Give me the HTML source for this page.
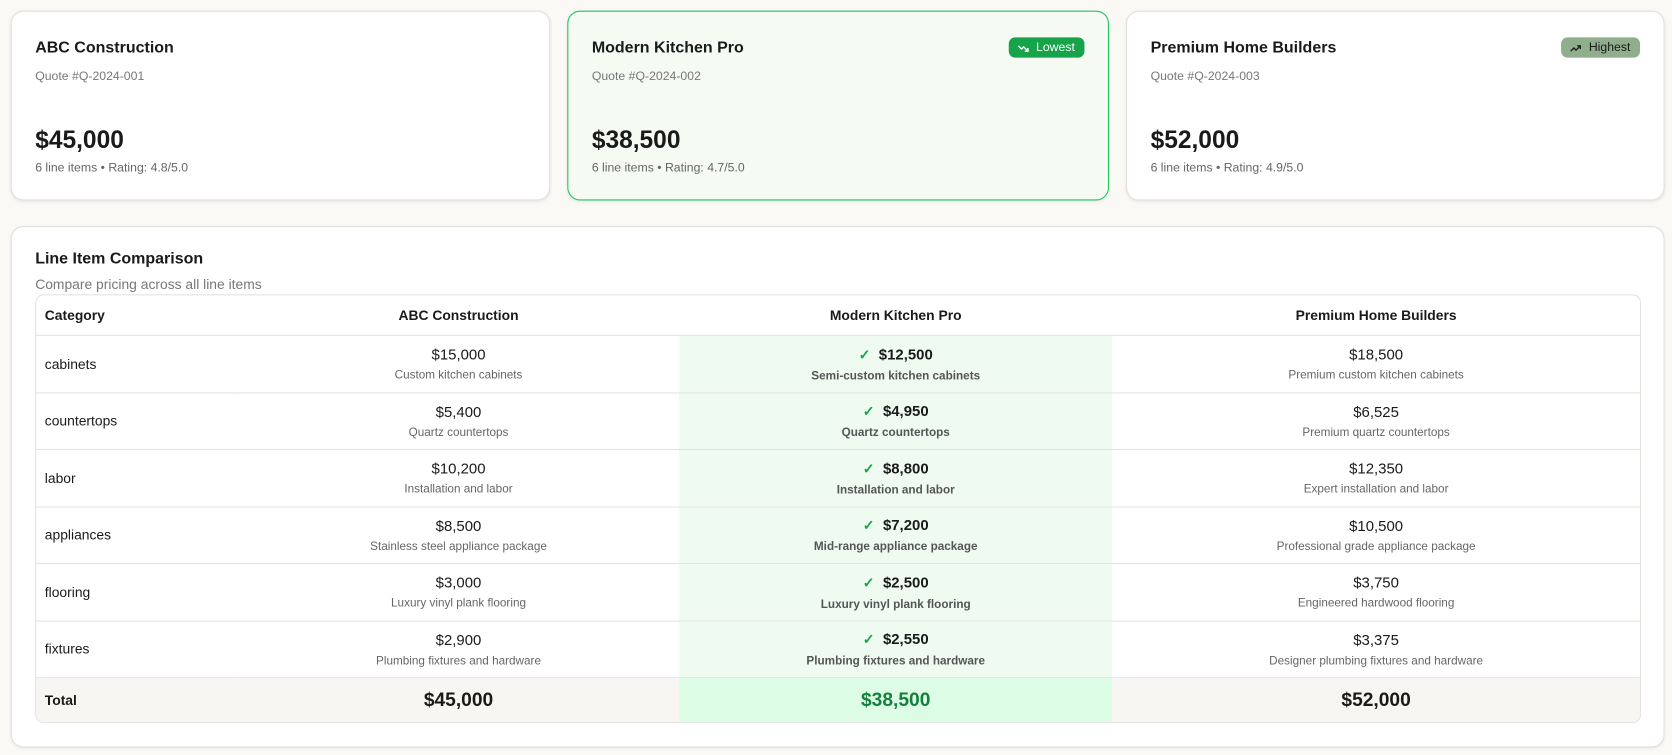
<!DOCTYPE html>
<html><head><style>
*{box-sizing:border-box;margin:0;padding:0}
html,body{width:1672px;height:755px;overflow:hidden}
body{background:#faf9f5;font-family:"Liberation Sans",sans-serif;color:#1a1a1a}
#w{position:relative;width:1568px;height:708px;transform:scale(1.06633);transform-origin:0 0}
.card{position:absolute;top:10px;height:178px;width:506px;background:#fff;border:1px solid #e2e0da;border-radius:12px;box-shadow:0 1px 3px rgba(0,0,0,.08)}
.card h3{position:absolute;left:22px;top:25px;font-size:15px;font-weight:600}
.card .q{position:absolute;left:22px;top:55px;font-size:11.5px;color:#777}
.card .p{position:absolute;left:22px;top:107px;font-size:23px;font-weight:700}
.card .s{position:absolute;left:22px;top:141px;font-size:11.5px;color:#666}
.badge{position:absolute;right:22px;top:24px;height:19px;border-radius:6px;font-size:11.5px;padding:0 9px 0 8px;display:flex;align-items:center;gap:6px}
.panel{position:absolute;left:10px;top:212px;width:1551px;height:489px;background:#fff;border:1px solid #e2e0da;border-radius:12px;box-shadow:0 1px 3px rgba(0,0,0,.06)}
.panel h2{position:absolute;left:22px;top:21px;font-size:15px;font-weight:600}
.panel .sub{position:absolute;left:22px;top:46px;font-size:13px;color:#777}
table{position:absolute;left:22px;top:63px;width:1506px;table-layout:fixed;border-collapse:separate;border-spacing:0;border:1px solid #e5e3de;border-radius:8px;overflow:hidden}
td,th{border-bottom:1px solid #e5e3de;text-align:center}
th{height:38px;font-size:13px;font-weight:600}
th:first-child,td:first-child{text-align:left;padding-left:8px}
td{height:53.5px;font-size:13px}
td .v{font-size:14px}
td .d{font-size:11px;color:#666;margin-top:6px}
.g{background:#effbf1}
.g .v{font-weight:600}.g .d{font-weight:600;color:#555}
.ck{color:#16a34a;margin-right:8px;font-size:13px}
tr.t td{border-bottom:none;height:41px;background:#f7f6f2;font-size:18px;font-weight:700}
tr.t td:first-child{font-size:13px}
tr.t td.g{background:#dcfce6;color:#15803d}
</style></head><body><div id="w">
<div class="card" style="left:10px"><h3>ABC Construction</h3><div class="q">Quote #Q-2024-001</div><div class="p">$45,000</div><div class="s">6 line items • Rating: 4.8/5.0</div></div>
<div class="card" style="left:532px;width:508px;background:#f5faf3;border-color:#22c55e"><h3>Modern Kitchen Pro</h3><div class="q">Quote #Q-2024-002</div><div class="p">$38,500</div><div class="s">6 line items • Rating: 4.7/5.0</div>
<div class="badge" style="background:#16a34a;color:#fff"><svg width="12" height="10" viewBox="0 0 12 10"><path d="M1 3l3 3 2-2 4 4M7 8h3V5" stroke="#fff" stroke-width="1.3" fill="none"/></svg>Lowest</div></div>
<div class="card" style="left:1056px;width:505px"><h3>Premium Home Builders</h3><div class="q">Quote #Q-2024-003</div><div class="p">$52,000</div><div class="s">6 line items • Rating: 4.9/5.0</div>
<div class="badge" style="background:#8fae8c;color:#1a1a1a"><svg width="12" height="10" viewBox="0 0 12 10"><path d="M1 8l3-3 2 2 4-4M7 3h3v3" stroke="#222" stroke-width="1.3" fill="none"/></svg>Highest</div></div>
<div class="panel"><h2>Line Item Comparison</h2><div class="sub">Compare pricing across all line items</div>
<table>
<colgroup><col style="width:189px"><col style="width:414px"><col style="width:406px"><col></colgroup>
<tr><th>Category</th><th>ABC Construction</th><th>Modern Kitchen Pro</th><th>Premium Home Builders</th></tr>
<tr><td>cabinets</td><td><div class="v">$15,000</div><div class="d">Custom kitchen cabinets</div></td><td class="g"><div class="v"><span class="ck">✓</span>$12,500</div><div class="d">Semi-custom kitchen cabinets</div></td><td><div class="v">$18,500</div><div class="d">Premium custom kitchen cabinets</div></td></tr>
<tr><td>countertops</td><td><div class="v">$5,400</div><div class="d">Quartz countertops</div></td><td class="g"><div class="v"><span class="ck">✓</span>$4,950</div><div class="d">Quartz countertops</div></td><td><div class="v">$6,525</div><div class="d">Premium quartz countertops</div></td></tr>
<tr><td>labor</td><td><div class="v">$10,200</div><div class="d">Installation and labor</div></td><td class="g"><div class="v"><span class="ck">✓</span>$8,800</div><div class="d">Installation and labor</div></td><td><div class="v">$12,350</div><div class="d">Expert installation and labor</div></td></tr>
<tr><td>appliances</td><td><div class="v">$8,500</div><div class="d">Stainless steel appliance package</div></td><td class="g"><div class="v"><span class="ck">✓</span>$7,200</div><div class="d">Mid-range appliance package</div></td><td><div class="v">$10,500</div><div class="d">Professional grade appliance package</div></td></tr>
<tr><td>flooring</td><td><div class="v">$3,000</div><div class="d">Luxury vinyl plank flooring</div></td><td class="g"><div class="v"><span class="ck">✓</span>$2,500</div><div class="d">Luxury vinyl plank flooring</div></td><td><div class="v">$3,750</div><div class="d">Engineered hardwood flooring</div></td></tr>
<tr><td>fixtures</td><td><div class="v">$2,900</div><div class="d">Plumbing fixtures and hardware</div></td><td class="g"><div class="v"><span class="ck">✓</span>$2,550</div><div class="d">Plumbing fixtures and hardware</div></td><td><div class="v">$3,375</div><div class="d">Designer plumbing fixtures and hardware</div></td></tr>
<tr class="t"><td>Total</td><td>$45,000</td><td class="g">$38,500</td><td>$52,000</td></tr>
</table></div>
</div></body></html>
